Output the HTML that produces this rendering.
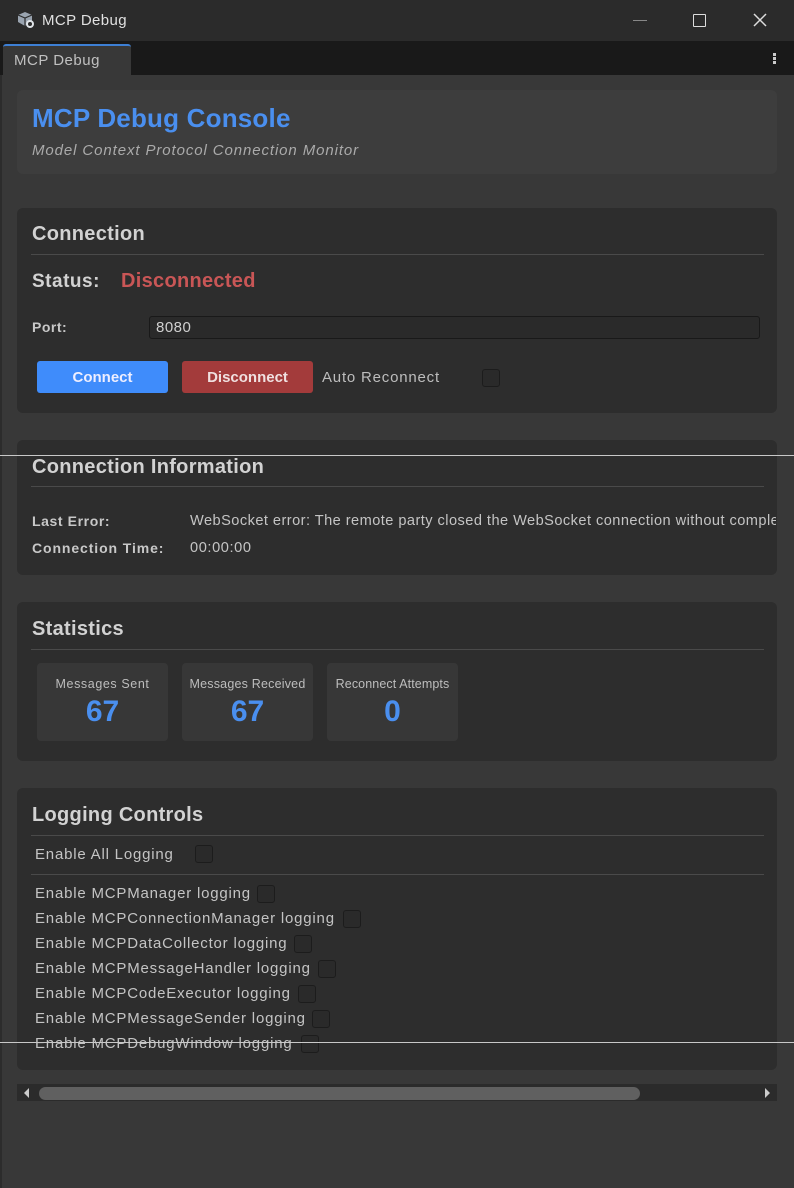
<!DOCTYPE html>
<html><head><meta charset="utf-8">
<style>
*{margin:0;padding:0;box-sizing:border-box}
body{width:794px;height:1188px;background:#383838;font-family:"Liberation Sans",Arial,sans-serif;color:#c8c8c8;position:relative;overflow:hidden}
.a{position:absolute}
.t{position:absolute;white-space:nowrap;line-height:1}
.panel{position:absolute;left:17px;width:760px;background:#2d2d2d;border-radius:6px}
.div{position:absolute;left:31px;width:733px;height:1px;background:#4a4a4a}
.h{font-size:20px;color:#d2d2d2;font-weight:bold;letter-spacing:0.3px}
.cb{position:absolute;width:18px;height:18px;background:#2a2a2a;border:1px solid #1c1c1c;border-radius:3px}
.box{position:absolute;top:663px;width:131px;height:78px;background:#373737;border-radius:4px;text-align:center}
.box .l{position:absolute;top:14px;left:0;right:0;font-size:12.5px;color:#bdbdbd;white-space:nowrap;letter-spacing:0.6px}
.box .n{position:absolute;top:34px;left:0;right:0;font-size:30px;font-weight:bold;color:#4a8fef;line-height:1}
.log{font-size:15px;color:#c4c4c4;letter-spacing:0.8px}
</style></head><body>
<div class="a" style="left:0;top:0;width:794px;height:41px;background:#2b2b2b"></div>
<svg class="a" style="left:16px;top:11px" width="20" height="18" viewBox="0 0 20 18"><path d="M9 1 L16 4 L16 11 L9 15 L2 11 L2 4 Z" fill="#9aa4b0"/><path d="M2 4 L9 7 L16 4 M9 7 L9 15" stroke="#2b2b2b" stroke-width="1.2" fill="none"/><circle cx="14" cy="13" r="4" fill="#e0e4e8"/><circle cx="14" cy="13" r="2" fill="#2b2b2b"/></svg>
<div class="t" style="left:42px;top:13px;font-size:15px;color:#e0e0e0;letter-spacing:0.4px">MCP Debug</div>
<div class="a" style="left:633px;top:20px;width:14px;height:1px;background:#888"></div>
<div class="a" style="left:693px;top:14px;width:13px;height:13px;border:1.5px solid #ddd;border-radius:1px"></div>
<svg class="a" style="left:753px;top:13px" width="14" height="14"><path d="M1 1L13 13M13 1L1 13" stroke="#ddd" stroke-width="1.5"/></svg>
<div class="a" style="left:0;top:41px;width:794px;height:34px;background:#191919"></div>
<div class="a" style="left:3px;top:44px;width:128px;height:31px;background:#383838;border-top:2px solid #3d7fd4;border-radius:3px 3px 0 0"></div>
<div class="t" style="left:14px;top:53px;font-size:15px;color:#c0c0c0;letter-spacing:0.5px">MCP Debug</div>
<div class="a" style="left:773px;top:53px;width:3px;height:3px;background:#ccc;box-shadow:0 4px 0 #ccc,0 8px 0 #ccc"></div>
<div class="a" style="left:0;top:75px;width:2px;height:1113px;background:#2c2c2c"></div>

<div class="panel" style="top:90px;height:84px;background:#3d3d3d"></div>
<div class="t" style="left:32px;top:105px;font-size:26px;font-weight:bold;color:#4a8fef;letter-spacing:0.2px">MCP Debug Console</div>
<div class="t" style="left:32px;top:143px;font-size:15px;font-style:italic;color:#aaa;letter-spacing:0.9px">Model Context Protocol Connection Monitor</div>

<div class="panel" style="top:208px;height:205px"></div>
<div class="t h" style="left:32px;top:224px">Connection</div>
<div class="div" style="top:254px"></div>
<div class="t" style="left:32px;top:272px;font-size:19px;font-weight:bold;color:#d2d2d2;letter-spacing:0.5px">Status:</div>
<div class="t" style="left:121px;top:271px;font-size:20px;font-weight:bold;color:#c95656;letter-spacing:0.3px">Disconnected</div>
<div class="t" style="left:32px;top:320px;font-size:14px;font-weight:bold;color:#c8c8c8;letter-spacing:0.5px">Port:</div>
<div class="a" style="left:149px;top:316px;width:611px;height:23px;background:#2a2a2a;border:1px solid #191919;border-radius:3px"></div>
<div class="t" style="left:156px;top:320px;font-size:15px;color:#d0d0d0;letter-spacing:0.5px">8080</div>
<div class="a" style="left:37px;top:361px;width:131px;height:32px;background:#3f8cfb;border-radius:3px"></div>
<div class="t" style="left:37px;top:370px;width:131px;text-align:center;font-size:15px;font-weight:bold;color:#eef">Connect</div>
<div class="a" style="left:182px;top:361px;width:131px;height:32px;background:#a33b3b;border-radius:3px"></div>
<div class="t" style="left:182px;top:370px;width:131px;text-align:center;font-size:15px;font-weight:bold;color:#f0e0e0">Disconnect</div>
<div class="t" style="left:322px;top:370px;font-size:15px;color:#bdbdbd;letter-spacing:0.8px">Auto Reconnect</div>
<div class="cb" style="left:482px;top:369px"></div>

<div class="panel" style="top:440px;height:135px"></div>
<div class="t h" style="left:32px;top:457px">Connection Information</div>
<div class="div" style="top:486px"></div>
<div class="t" style="left:32px;top:514px;font-size:14px;font-weight:bold;letter-spacing:0.6px">Last Error:</div>
<div class="a" style="left:190px;top:510px;width:586px;height:20px;overflow:hidden"><div class="t" style="left:0;top:4px;font-size:14.6px;color:#c4c4c4;letter-spacing:0.45px">WebSocket error: The remote party closed the WebSocket connection without completing the close handshake.</div></div>
<div class="t" style="left:32px;top:541px;font-size:14px;font-weight:bold;letter-spacing:0.9px">Connection Time:</div>
<div class="t" style="left:190px;top:541px;font-size:14.6px;color:#c4c4c4;letter-spacing:0.6px">00:00:00</div>

<div class="panel" style="top:602px;height:159px"></div>
<div class="t h" style="left:32px;top:619px">Statistics</div>
<div class="div" style="top:649px"></div>
<div class="box" style="left:37px"><div class="l">Messages Sent</div><div class="n">67</div></div>
<div class="box" style="left:182px"><div class="l" style="letter-spacing:0.2px">Messages Received</div><div class="n">67</div></div>
<div class="box" style="left:327px"><div class="l" style="letter-spacing:0.1px">Reconnect Attempts</div><div class="n">0</div></div>

<div class="panel" style="top:788px;height:282px"></div>
<div class="t h" style="left:32px;top:805px">Logging Controls</div>
<div class="div" style="top:835px"></div>
<div class="t log" style="left:35px;top:847px">Enable All Logging</div>
<div class="cb" style="left:195px;top:845px"></div>
<div class="div" style="top:874px"></div>
<div class="t log" style="left:35px;top:886px">Enable MCPManager logging</div><div class="cb" style="left:257px;top:885px"></div>
<div class="t log" style="left:35px;top:911px">Enable MCPConnectionManager logging</div><div class="cb" style="left:343px;top:910px"></div>
<div class="t log" style="left:35px;top:936px">Enable MCPDataCollector logging</div><div class="cb" style="left:294px;top:935px"></div>
<div class="t log" style="left:35px;top:961px">Enable MCPMessageHandler logging</div><div class="cb" style="left:318px;top:960px"></div>
<div class="t log" style="left:35px;top:986px">Enable MCPCodeExecutor logging</div><div class="cb" style="left:298px;top:985px"></div>
<div class="t log" style="left:35px;top:1011px">Enable MCPMessageSender logging</div><div class="cb" style="left:312px;top:1010px"></div>
<div class="t log" style="left:35px;top:1036px">Enable MCPDebugWindow logging</div><div class="cb" style="left:301px;top:1035px"></div>

<div class="a" style="left:17px;top:1084px;width:760px;height:17px;background:#2b2b2b"></div>
<div class="a" style="left:39px;top:1087px;width:601px;height:13px;background:#606060;border-radius:7px"></div>
<svg class="a" style="left:23px;top:1088px" width="8" height="10"><path d="M6 0L1 5L6 10Z" fill="#ccc"/></svg>
<svg class="a" style="left:763px;top:1088px" width="8" height="10"><path d="M2 0L7 5L2 10Z" fill="#ccc"/></svg>

<div class="a" style="left:0;top:455px;width:794px;height:1px;background:#c8c8c8"></div>
<div class="a" style="left:0;top:1042px;width:794px;height:1px;background:#c8c8c8"></div>
</body></html>
